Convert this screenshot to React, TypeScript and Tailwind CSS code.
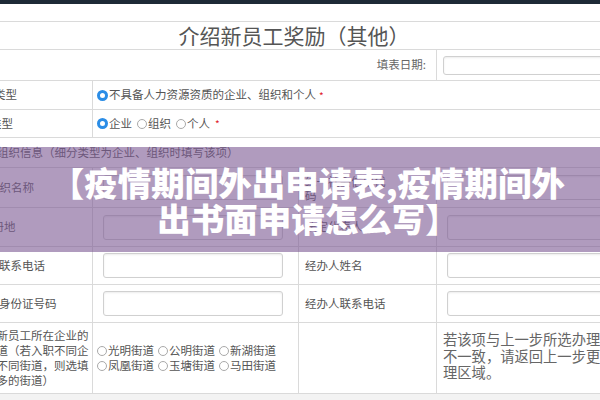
import React from "react";

const COLS = "grid grid-cols-[123px_206px_138px_213px]";

function Radio({ on }: { on?: boolean }) {
  if (on) {
    return <span className="inline-block w-[11px] h-[11px] shrink-0 rounded-full border-[3px] border-[#2b8de6] bg-white" />;
  }
  return <span className="inline-block w-[10px] h-[10px] shrink-0 rounded-full border border-[#a9a9a9] bg-white" />;
}

function Field({ className = "" }: { className?: string }) {
  return (
    <div
      className={`rounded-[3px] border border-[#d0d0d0] bg-white shadow-[inset_0_1px_2px_rgba(0,0,0,0.08)] ${className}`}
    />
  );
}

function Opt({ on, label }: { on?: boolean; label: string }) {
  return (
    <span className="flex items-center">
      <Radio on={on} />
      <span className="ml-[1px]">{label}</span>
    </span>
  );
}

export default function App() {
  const line = "border-[#dadada]";

  return (
    <div className="relative flex h-[400px] w-[600px] flex-col overflow-hidden bg-white font-['Noto_Sans_CJK_SC',sans-serif] text-[#555]">
      <div className="h-[4px] bg-[#1d2a36]" />
      <div className="h-[17px]" />

      {/* title */}
      <div className={`flex h-[29px] items-center justify-center border-y ${line} pr-[12px] text-[21px] text-[#555]`}>
        介绍新员工奖励（其他）
      </div>

      <div className="-ml-[30px] w-[680px] text-[11.5px]">
        {/* date */}
        <div className={`${COLS} h-[31px]`}>
          <div className={`col-span-3 flex items-center justify-end border-r border-b ${line} pr-[10px] text-[#666]`}>
            填表日期:
          </div>
          <div className={`flex items-center border-b ${line} pl-[6px]`}>
            <Field className="h-[19px] w-[210px]" />
          </div>
        </div>

        {/* type */}
        <div className={`${COLS} h-[29px]`}>
          <div className={`flex items-center border-r border-b ${line} pl-[24px]`}>类型</div>
          <div className={`col-span-3 flex items-center border-b ${line} pl-[4px]`}>
            <Opt on label="不具备人力资源资质的企业、组织和个人" />
            <span className="ml-[3px] text-[10px] text-[#e0202a]">*</span>
          </div>
        </div>

        <div className={`${COLS} h-[28px]`}>
          <div className={`flex items-center border-r border-b ${line} pl-[20px]`}>类型</div>
          <div className={`col-span-3 flex items-center gap-[5px] border-b ${line} pl-[4px]`}>
            <Opt on label="企业" />
            <Opt label="组织" />
            <Opt label="个人" />
            <span className="text-[10px] text-[#e0202a]">*</span>
          </div>
        </div>

        {/* org section */}
        <div className={`flex h-[30px] items-center border-b ${line} pl-[27px]`}>
          组织信息（细分类型为企业、组织时填写该项）
        </div>

        <div className={`${COLS} h-[40px]`}>
          <div className={`flex items-center border-r border-b ${line} pl-[18px]`}>组织名称</div>
          <div className={`flex items-center border-r border-b ${line} pl-[10px]`}>
            <Field className="h-[25px] w-[180px]" />
          </div>
          <div className={`flex items-center border-r border-b ${line} pl-[6px] pr-[40px] leading-[14px]`}>
            统一社会信用代码
          </div>
          <div className={`flex items-center border-b ${line} pl-[10px]`}>
            <Field className="h-[25px] w-[200px]" />
          </div>
        </div>

        <div className={`${COLS} h-[39px]`}>
          <div className={`flex items-center border-r border-b ${line} pl-[11px]`}>注册地</div>
          <div className={`flex items-center border-r border-b ${line} pl-[10px]`}>
            <Field className="h-[25px] w-[180px]" />
          </div>
          <div className={`flex items-center border-r border-b ${line} pl-[6px]`}>法定代表人</div>
          <div className={`flex items-center border-b ${line} pl-[10px]`}>
            <Field className="h-[25px] w-[200px]" />
          </div>
        </div>

        {/* contact */}
        <div className={`${COLS} h-[38px]`}>
          <div className={`flex items-center border-r border-b ${line} pl-[29px]`}>联系电话</div>
          <div className={`flex items-center border-r border-b ${line} pl-[10px]`}>
            <Field className="h-[25px] w-[180px]" />
          </div>
          <div className={`flex items-center border-r border-b ${line} pl-[6px]`}>经办人姓名</div>
          <div className={`flex items-center border-b ${line} pl-[10px]`}>
            <Field className="h-[25px] w-[200px]" />
          </div>
        </div>

        <div className={`${COLS} h-[38px]`}>
          <div className={`flex items-center border-r border-b ${line} pl-[29px]`}>身份证号码</div>
          <div className={`flex items-center border-r border-b ${line} pl-[10px]`}>
            <Field className="h-[25px] w-[180px]" />
          </div>
          <div className={`flex items-center border-r border-b ${line} pl-[6px]`}>经办人联系电话</div>
          <div className={`flex items-center border-b ${line} pl-[10px]`}>
            <Field className="h-[25px] w-[200px]" />
          </div>
        </div>

        {/* street */}
        <div className={`${COLS} h-[71px]`}>
          <div className={`flex items-center border-r border-b ${line} pl-[15px] leading-[15px] whitespace-nowrap`}>
            <div>
              即新员工所在企业的
              <br />
              街道（若入职不同企
              <br />
              业不同街道，则选填
              <br />
              最多的街道）
            </div>
          </div>
          <div className={`flex flex-col justify-center border-r border-b ${line} pl-[4px] leading-[15px]`}>
            <div className="flex items-center gap-[4px]">
              <Opt label="光明街道" />
              <Opt label="公明街道" />
              <Opt label="新湖街道" />
            </div>
            <div className="flex items-center gap-[4px]">
              <Opt label="凤凰街道" />
              <Opt label="玉塘街道" />
              <Opt label="马田街道" />
            </div>
          </div>
          <div className={`border-r border-b ${line}`} />
          <div className={`border-b ${line} pl-[6px] pt-[8px]`}>
            <div className="w-[190px] text-[14.3px] leading-[16.5px] text-[#666]">
              若该项与上一步所选办理区域不一致，请返回上一步更改办理区域。
            </div>
          </div>
        </div>
      </div>
      <div className="flex-1 bg-[#f3f3f3]" />

      {/* article title overlay */}
      <div className="absolute left-0 top-[147px] flex h-[105px] w-[600px] items-center justify-center bg-[#7b5893]/60 pl-[16px]">
        <div className="w-[536px] text-center text-[33.5px] font-black leading-[36px] text-white">
          【疫情期间外出申请表,疫情期间外出书面申请怎么写】
        </div>
      </div>
    </div>
  );
}
